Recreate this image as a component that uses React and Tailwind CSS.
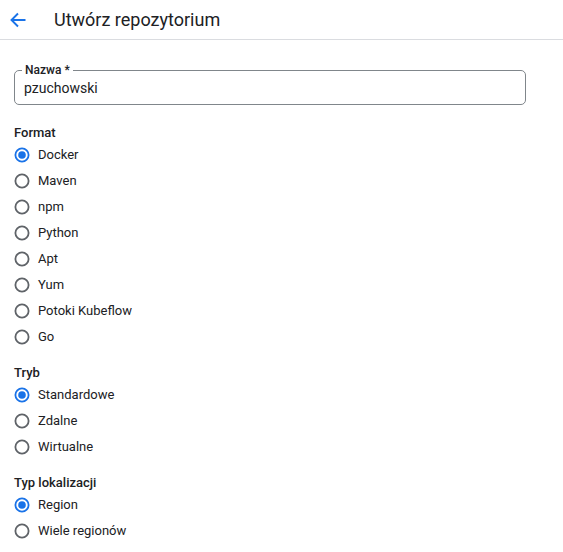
import { useState } from 'react';

const sections = [
  { title: 'Format', key: 'format', options: ['Docker', 'Maven', 'npm', 'Python', 'Apt', 'Yum', 'Potoki Kubeflow', 'Go'] },
  { title: 'Tryb', key: 'mode', options: ['Standardowe', 'Zdalne', 'Wirtualne'] },
  { title: 'Typ lokalizacji', key: 'location', options: ['Region', 'Wiele regionów'] },
];

function Radio({ checked }) {
  return (
    <svg width="20" height="20" viewBox="0 0 20 20" className="shrink-0">
      <circle cx="10" cy="10" r="6.6" fill="none" stroke={checked ? '#1a73e8' : '#5f6368'} strokeWidth="1.8" />
      {checked && <circle cx="10" cy="10" r="3.8" fill="#1a73e8" />}
    </svg>
  );
}

export default function App() {
  const [values, setValues] = useState({ format: 'Docker', mode: 'Standardowe', location: 'Region' });
  const [name, setName] = useState('pzuchowski');

  return (
    <div className="w-[563px] h-[552px] bg-white text-[#202124] overflow-hidden" style={{ fontFamily: 'Roboto, "Liberation Sans", sans-serif' }}>
      {/* Header */}
      <div className="h-[40px] border-b border-[#dadce0] flex items-center">
        <button className="ml-[10px] w-[16px] h-[16px] flex items-center justify-center">
          <svg width="16" height="16" viewBox="0 0 16 16">
            <path d="M15.5 8H1.5M8 1.5L1.5 8L8 14.5" fill="none" stroke="#1a73e8" strokeWidth="1.9" />
          </svg>
        </button>
        <h1 className="ml-[28px] text-[18px] leading-none">Utwórz repozytorium</h1>
      </div>

      <div className="pl-[14px] pt-[30px]">
        {/* Name field */}
        <div className="relative w-[512px] h-[35px] border border-[#80868b] rounded-[5px]">
          <label className="absolute -top-[9px] left-[7px] bg-white px-[3px] text-[12px] font-medium leading-[16px]">Nazwa *</label>
          <input
            value={name}
            onChange={e => setName(e.target.value)}
            className="w-full h-full pl-[9px] pt-[1px] text-[14px] outline-none bg-transparent"
          />
        </div>

        {sections.map((s, i) => (
          <div key={s.key} className={i === 0 ? 'mt-[19px]' : 'mt-[14px]'}>
            <div className="h-[18px] flex items-center text-[13px] font-medium">{s.title}</div>
            {s.options.map(opt => (
              <label
                key={opt}
                className="h-[26px] flex items-center gap-[6px] -ml-[2px] cursor-pointer text-[13px]"
                onClick={() => setValues({ ...values, [s.key]: opt })}
              >
                <Radio checked={values[s.key] === opt} />
                <span>{opt}</span>
              </label>
            ))}
          </div>
        ))}
      </div>
    </div>
  );
}
